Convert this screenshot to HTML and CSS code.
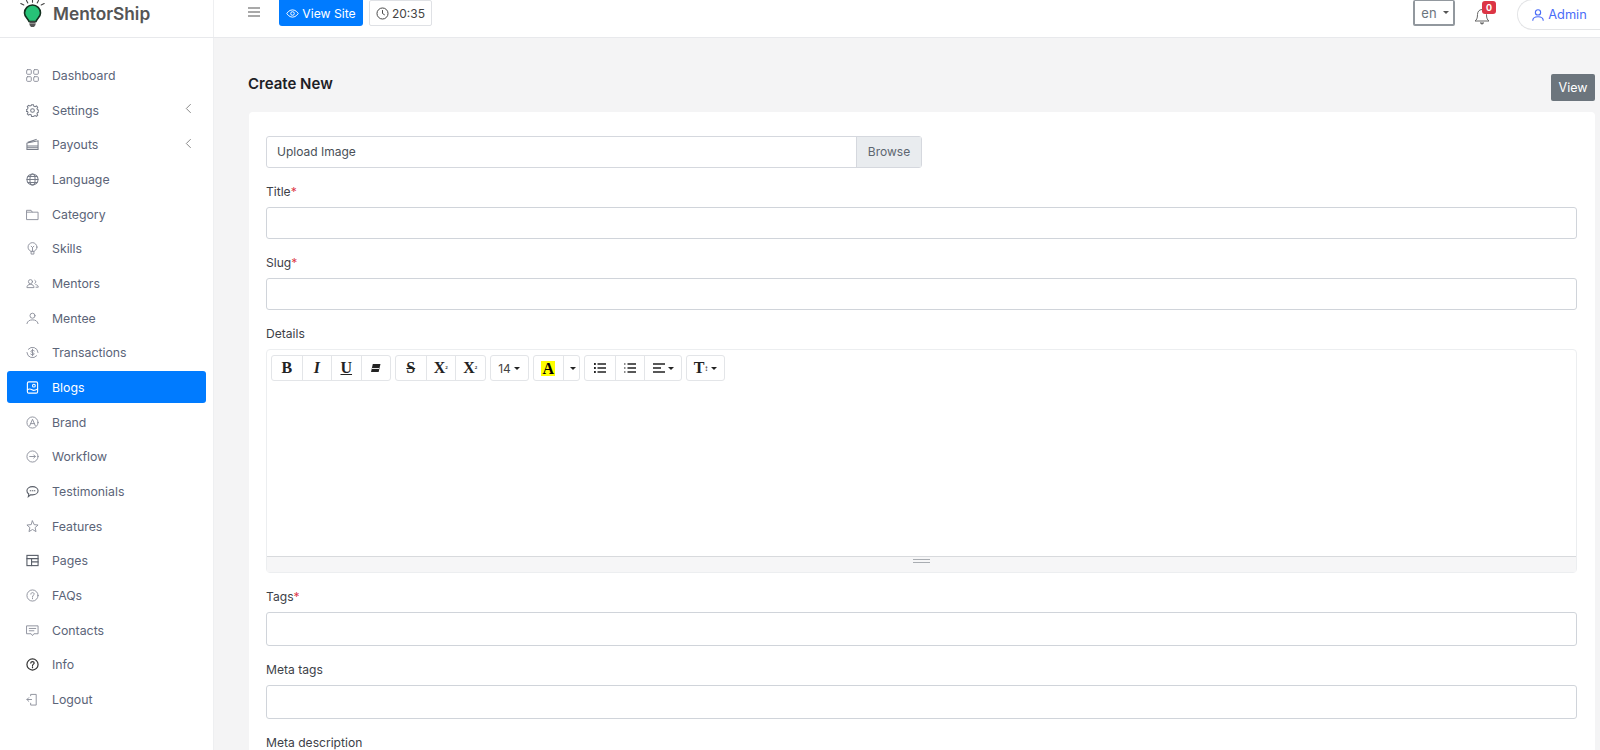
FILE: index.html
```html
<!DOCTYPE html>
<html lang="en">
<head>
<meta charset="utf-8">
<title>MentorShip</title>
<link rel="stylesheet" href="styles.css">
</head>
<body>
<header class="topbar">
  <div class="brand">
    <svg class="logo" viewBox="0 0 28 28" width="28" height="28">
      <g stroke="#444" stroke-width="1.100" stroke-linecap="round" fill="none"><path d="M13.500 0v2.200M7.500 .5l1.300 2.500M19.500 .5L18.200 3M1.800 3.500l3 1.500M25.200 3.500l-3 1.500"/></g>
      <path d="M13.500 5a8 8 0 0 0-8 8c0 3.500 3 5 4.500 8.500h7c1.500-3.500 4.500-5 4.500-8.500a8 8 0 0 0-8-8z" fill="#27c277" stroke="#14301f" stroke-width="1.600"/>
      <path d="M10.500 21.500h6v3.500l-1.500 2h-3l-1.500-2z" fill="#555"/>
      <path d="M10.500 23.500h6" stroke="#bbb" stroke-width=".6"/>
    </svg>
    <span class="brand-name">MentorShip</span>
  </div>
  <div class="top-left">
    <svg class="burger" viewBox="0 0 12 10" width="12" height="10"><path d="M0 1h12M0 5h12M0 9h12" stroke="#555" stroke-width="1.200"/></svg>
    <a class="view-site">
      <svg viewBox="0 0 16 16" width="13" height="13" fill="none" stroke="#fff" stroke-width="1.200"><path d="M1 8s2.500-4.500 7-4.500S15 8 15 8s-2.500 4.500-7 4.500S1 8 1 8z"/><circle cx="8" cy="8" r="2.200"/></svg>
      View Site
    </a>
    <span class="clock">
      <svg viewBox="0 0 16 16" width="13" height="13" fill="none" stroke="#444" stroke-width="1.200"><circle cx="8" cy="8" r="6.800"/><path d="M8 3.800V8l2.800 1.800"/></svg>
      20:35
    </span>
  </div>
  <div class="top-right">
    <span class="lang">en<i class="caret"></i></span>
    <span class="bell">
      <svg viewBox="0 0 16 18" width="16" height="18" fill="none" stroke="#666" stroke-width="1"><path d="M8 2.500c-3 0-4.500 2.500-4.500 5 0 4-1 5.500-2.500 6.500h14c-1.500-1-2.500-2.500-2.500-6.500 0-2.500-1.500-5-4.500-5z"/><path d="M6.500 15.500a1.500 1.500 0 0 0 3 0" fill="#666"/></svg>
      <b class="badge">0</b>
    </span>
    <span class="admin">
      <svg viewBox="0 0 16 16" width="14" height="14" fill="none" stroke="#4a6cf7" stroke-width="1.300"><circle cx="8" cy="5" r="3"/><path d="M2 14.500c0-3 2.500-4.500 6-4.500s6 1.500 6 4.500"/></svg>
      Admin
    </span>
  </div>
</header>
<div class="shell">
  <nav class="sidebar">
    <a class="nav-item"><svg class="ico" viewBox="0 0 14 14"><rect x=".7" y=".7" width="5" height="5" rx="1"/><rect x="8.300" y=".7" width="5" height="5" rx="1"/><rect x=".7" y="8.300" width="5" height="5" rx="1"/><rect x="8.300" y="8.300" width="5" height="5" rx="1"/></svg><span>Dashboard</span></a>
    <a class="nav-item"><svg class="ico mid" viewBox="0 0 14 14"><circle cx="7" cy="7" r="2"/><path d="M6 .7h2l.4 1.600 1.400.6 1.500-.8 1.300 1.400-.8 1.400.6 1.400 1.400.4v2l-1.400.4-.6 1.400.8 1.500-1.300 1.300-1.500-.8-1.400.6L8 13.400H6l-.4-1.600-1.400-.6-1.500.8-1.300-1.300.8-1.500-.6-1.400L.2 8V6l1.400-.4.6-1.400-.8-1.400 1.300-1.400 1.500.8 1.400-.6z"/></svg><span>Settings</span><svg class="chev" viewBox="0 0 8 12"><path d="M6.500 1L1.500 6l5 5"/></svg></a>
    <a class="nav-item"><svg class="ico mid" viewBox="0 0 14 14"><path d="M1 6v6.500h12V3L1 5.500zM1 8.500h12M1 10.500h12M2 4.500L11 1.500"/></svg><span>Payouts</span><svg class="chev" viewBox="0 0 8 12"><path d="M6.500 1L1.500 6l5 5"/></svg></a>
    <a class="nav-item"><svg class="ico mid" viewBox="0 0 14 14"><circle cx="7" cy="7" r="6"/><ellipse cx="7" cy="7" rx="2.800" ry="6"/><path d="M1 7h12M2 3.800h10M2 10.200h10"/></svg><span>Language</span></a>
    <a class="nav-item"><svg class="ico" viewBox="0 0 14 14"><path d="M1 2.500h4.500l1.200 2H13v8H1zM1 4.500h5.700"/></svg><span>Category</span></a>
    <a class="nav-item"><svg class="ico" viewBox="0 0 14 14"><circle cx="7" cy="5.500" r="4.800"/><path d="M5.500 10v3h3v-3M7 10V6M5.500 4.500L7 6l1.500-1.500"/></svg><span>Skills</span></a>
    <a class="nav-item"><svg class="ico" viewBox="0 0 14 14"><circle cx="4.800" cy="5" r="2.200"/><path d="M1 11c0-2 1.500-3 3.800-3s3.800 1 3.800 3zM9.500 3.500a1.800 1.800 0 0 1 0 3.300M10.500 8.200c1.500.2 2.700 1 2.700 2.800h-2.400"/></svg><span>Mentors</span></a>
    <a class="nav-item"><svg class="ico" viewBox="0 0 14 14"><circle cx="7" cy="4" r="2.700"/><path d="M1 12.500c.6-3 3-4 6-4s5.400 1 6 4"/></svg><span>Mentee</span></a>
    <a class="nav-item"><svg class="ico" viewBox="0 0 14 14"><path d="M2.500 3.500A6 6 0 0 1 13 7M11.500 10.500A6 6 0 0 1 1 7M9 5.200C8.500 4.500 5.300 4.300 5.300 5.800S8.800 7 8.800 8.500 5.500 9.600 5 8.800M7 3.500v7"/></svg><span>Transactions</span></a>
    <a class="nav-item active"><svg class="ico" viewBox="0 0 14 14"><rect x="1.500" y="1" width="11" height="12" rx="1.500"/><circle cx="8.500" cy="5" r="1.500"/><path d="M1.500 9.500c2-1.500 3.500-1 5 0s3 1 6-1"/></svg><span>Blogs</span></a>
    <a class="nav-item"><svg class="ico" viewBox="0 0 14 14"><circle cx="7" cy="7" r="6"/><path d="M4 10.500L7 3.500l3 7M5 8.200h4"/></svg><span>Brand</span></a>
    <a class="nav-item"><svg class="ico" viewBox="0 0 14 14"><circle cx="7" cy="7" r="6"/><path d="M4 7h6M8.300 5.300L10 7 8.300 8.700"/></svg><span>Workflow</span></a>
    <a class="nav-item"><svg class="ico dark" viewBox="0 0 14 14"><path d="M7 1.800c3.300 0 6 1.900 6 4.400s-2.700 4.400-6 4.400c-.6 0-1.200 0-1.700-.2L2.500 12.500l.5-2.800C1.700 8.900 1 7.600 1 6.200c0-2.500 2.700-4.400 6-4.400z"/><path d="M4.500 6.200h.6M6.800 6.200h.6M9 6.200h.6"/></svg><span>Testimonials</span></a>
    <a class="nav-item"><svg class="ico" viewBox="0 0 14 14"><path d="M7 1l1.800 4 4.200.4-3.200 2.800 1 4.300L7 10.200 3.200 12.500l1-4.300L1 5.400 5.200 5z"/></svg><span>Features</span></a>
    <a class="nav-item"><svg class="ico dark" viewBox="0 0 14 14"><rect x="1" y="1.500" width="12" height="11"/><path d="M1 5h12M6 5v7.500M6 8.500h7"/></svg><span>Pages</span></a>
    <a class="nav-item"><svg class="ico" viewBox="0 0 14 14"><circle cx="7" cy="7" r="6"/><path d="M5.200 5.500C5.200 4.500 6 3.900 7 3.900s1.800.6 1.800 1.600S7 6.800 7 8.200M7 9.500v1"/></svg><span>FAQs</span></a>
    <a class="nav-item"><svg class="ico" viewBox="0 0 14 14"><path d="M1 2h12v8.500H8.500L7 12.500l-1.500-2H1zM3.500 4.800h7M3.500 7.300h5"/></svg><span>Contacts</span></a>
    <a class="nav-item"><svg class="ico black" viewBox="0 0 14 14"><circle cx="7" cy="7" r="6"/><path d="M5.200 5.500C5.200 4.500 6 3.900 7 3.900s1.800.6 1.800 1.600S7 6.800 7 8.200M7 9.500v1"/></svg><span>Info</span></a>
    <a class="nav-item"><svg class="ico" viewBox="0 0 14 14"><path d="M5 3V1.500h6v11.500H5v-2M1 7h5M3 5L1 7l2 2"/></svg><span>Logout</span></a>
  </nav>
  <main class="main">
    <div class="title-row">
      <h1 class="page-title">Create New</h1>
      <a class="view-btn">View</a>
    </div>
    <section class="card">
      <div class="upload"><span class="upload-label">Upload Image</span><span class="browse">Browse</span></div>
      <label class="field-label">Title<em>*</em></label>
      <div class="input"></div>
      <label class="field-label">Slug<em>*</em></label>
      <div class="input"></div>
      <label class="field-label">Details</label>
      <div class="editor">
        <div class="toolbar">
          <div class="tgroup">
            <span class="tbtn w29 serif bold">B</span><span class="tbtn w29 serif bold ital">I</span><span class="tbtn w29 serif bold under">U</span><span class="tbtn w29"><svg viewBox="0 0 12 10" width="11" height="9"><path d="M3 0h8.500L9.500 9H1z" fill="#222"/><path d="M2 5h8" stroke="#fff"/></svg></span>
          </div>
          <div class="tgroup">
            <span class="tbtn w29 serif bold strike">S</span><span class="tbtn w29 serif bold">X<sup>2</sup></span><span class="tbtn w29 serif bold">X<sub>2</sub></span>
          </div>
          <div class="tgroup"><span class="tbtn w37 plain">14<i class="caret small"></i></span></div>
          <div class="tgroup">
            <span class="tbtn w29 serif bold"><span class="hilite">A</span></span><span class="tbtn w16"><i class="caret small"></i></span>
          </div>
          <div class="tgroup">
            <span class="tbtn w29"><svg viewBox="0 0 12 10" width="12" height="10"><path d="M3.500 1H12M3.500 5H12M3.500 9H12" stroke="#222" stroke-width="1.500"/><path d="M0 1h1.800M0 5h1.800M0 9h1.800" stroke="#222" stroke-width="1.800"/></svg></span>
            <span class="tbtn w29"><svg viewBox="0 0 12 10" width="12" height="10"><path d="M3.500 1H12M3.500 5H12M3.500 9H12" stroke="#222" stroke-width="1.500"/><path d="M0 1h1.500M0 5h1.500M0 9h1.500" stroke="#666" stroke-width="1.500"/></svg></span>
            <span class="tbtn w37"><svg viewBox="0 0 12 10" width="12" height="10"><path d="M0 1h12M0 5h8M0 9h12" stroke="#222" stroke-width="1.300"/></svg><i class="caret small"></i></span>
          </div>
          <div class="tgroup"><span class="tbtn w37 serif bold large">T<span class="tiny">↕</span><i class="caret small"></i></span></div>
        </div>
        <div class="edit-area"></div>
        <div class="resize"><i></i></div>
      </div>
      <label class="field-label tags">Tags<em>*</em></label>
      <div class="input tall"></div>
      <label class="field-label">Meta tags</label>
      <div class="input tall"></div>
      <label class="field-label">Meta description</label>
    </section>
  </main>
</div>
</body>
</html>
```
FILE: styles.css
```css
* { box-sizing: border-box; }
html, body { margin: 0; height: 750px; overflow: hidden; }
body { font-family: Inter, "Liberation Sans", sans-serif; color: #333; background: #f4f4f5; font-size: 12px; display: flex; flex-direction: column; }

.topbar { height: 38px; flex: none; background: #fff; border-bottom: 1px solid #e8e9ec; display: flex; align-items: flex-start; }
.brand { width: 214px; height: 37px; flex: none; border-right: 1px solid #eeeff1; display: flex; align-items: flex-start; padding-left: 19px; gap: 6px; }
.brand-name { font-size: 17.300px; font-weight: 600; color: #555; line-height: 27px; }
.top-left { display: flex; align-items: flex-start; padding-left: 34px; }
.burger { margin-top: 7px; margin-right: 19px; }
.view-site { height: 26px; width: 84px; background: #007bff; color: #fff; border-radius: 0 0 3px 3px; display: flex; align-items: center; justify-content: center; gap: 3px; font-size: 12.200px; }
.clock { height: 26px; width: 63px; margin-left: 6px; border: 1px solid #dfe1e5; border-radius: 2px; display: flex; align-items: center; justify-content: center; gap: 3px; color: #444; font-size: 12px; }
.top-right { margin-left: auto; display: flex; align-items: flex-start; }
.lang { width: 42px; height: 26px; border: 2px solid #92989e; border-top-width: 1px; border-radius: 2px; color: #6c757d; font-size: 13px; display: flex; align-items: center; justify-content: center; gap: 6px; padding-left: 2px; }
.caret { width: 0; height: 0; border: 3.500px solid transparent; border-top-color: #555; border-bottom: 0; display: inline-block; }
.caret.small { border-width: 3px; border-bottom: 0; border-top-color: #222; margin-left: 3px; }
.bell { position: relative; margin-left: 19px; margin-right: 21px; width: 22px; height: 26px; padding-top: 7px; }
.badge { position: absolute; left: 8px; top: 1px; width: 14px; height: 13px; background: #dc3545; color: #fff; border-radius: 3px; font-size: 9px; line-height: 13px; text-align: center; }
.admin { width: 83px; height: 31px; margin-top: -1px; border: 1px solid #e3e4e6; border-right: 0; border-radius: 16px 0 0 16px; display: flex; align-items: center; justify-content: center; gap: 3px; color: #4a6cf7; font-size: 12.800px; }

.shell { flex: 1; display: flex; min-height: 0; overflow: hidden; }
.sidebar { width: 214px; flex: none; background: #fff; border-right: 1px solid #eeeff1; padding: 21.500px 7px 0; display: flex; flex-direction: column; gap: 2.670px; }
.nav-item { height: 32px; display: flex; align-items: center; padding-left: 19px; border-radius: 3px; color: #5b6478; font-size: 12.300px; }
.nav-item span { margin-left: 13px; flex: 1; }
.ico { width: 13px; height: 13px; flex: none; fill: none; stroke: #8b8f9a; stroke-width: 1; stroke-linecap: round; }
.ico.mid { stroke: #777c88; stroke-width: 1.100; }
.ico.dark { stroke: #5a5f69; stroke-width: 1.200; }
.ico.black { stroke: #333; stroke-width: 1.300; }
.chev { width: 7px; height: 11px; fill: none; stroke: #777; stroke-width: 1; margin-right: 14px; margin-top: -3px; }
.nav-item.active { background: #007bff; color: #fff; }
.nav-item.active .ico { stroke: #fff; stroke-width: 1.200; }

.main { flex: 1; min-width: 0; padding: 0 5px 0 34px; display: flex; flex-direction: column; overflow: hidden; }
.title-row { display: flex; justify-content: space-between; height: 74px; flex: none; }
.page-title { margin: 36px 0 0; font-size: 15px; font-weight: 600; color: #1d2026; line-height: 20px; }
.view-btn { margin-top: 36px; width: 44px; height: 27px; background: #6c757d; color: #fff; border-radius: 2px; font-size: 12.500px; display: flex; align-items: center; justify-content: center; }
.card { flex: 1; min-height: 0; overflow: hidden; margin-left: 1px; background: #fff; border-radius: 4px 4px 0 0; padding: 24px 18px 0 17px; }
.upload { width: 656px; height: 32px; border: 1px solid #d5d8de; border-radius: 3px; display: flex; align-items: stretch; margin-bottom: 16px; }
.upload-label { flex: 1; padding-left: 10px; line-height: 30px; color: #495057; font-size: 12px; }
.browse { width: 65px; background: #e9ecef; border-left: 1px solid #d5d8de; color: #5d6670; font-size: 12px; line-height: 30px; text-align: center; }
.field-label { display: block; height: 16px; line-height: 16px; font-size: 12.100px; color: #3d4148; margin-bottom: 7px; }
.field-label em { color: #dc3545; font-style: normal; }
.input { height: 32px; border: 1px solid #d0d4da; border-radius: 3px; margin-bottom: 16px; }
.input.tall { height: 34px; }
.field-label.tags { margin-top: 16px; }
.editor { height: 224px; border: 1px solid #eceef0; border-radius: 4px; display: flex; flex-direction: column; }
.toolbar { display: flex; gap: 4px; padding: 5px 0 0 4px; height: 31px; flex: none; }
.tgroup { display: flex; height: 26px; border: 1px solid #e3e5e8; border-radius: 3px; }
.tbtn { display: flex; align-items: center; justify-content: center; border-left: 1px solid #e3e5e8; color: #222; height: 24px; font-size: 12px; }
.tbtn:first-child { border-left: 0; }
.w29 { width: 29.500px; }
.w16 { width: 16px; }
.w37 { width: 37px; }
.serif { font-family: "Liberation Serif", serif; font-size: 16px; }
.large { font-size: 16px; }
.bold { font-weight: 700; }
.ital { font-style: italic; }
.under { text-decoration: underline; }
.strike { text-decoration: line-through; }
.plain { color: #444; font-size: 12px; }
.tbtn sup, .tbtn sub { font-size: 5px; line-height: 0; }
.tiny { font-size: 8px; font-weight: 400; }
.hilite { background: #ffff00; padding: 0 1px; line-height: 15px; color: #000; }
.edit-area { flex: 1; }
.resize { height: 16px; flex: none; background: #f6f6f7; border-top: 1px solid #d8dadd; display: flex; align-items: flex-start; justify-content: center; padding-top: 2px; }
.resize i { width: 17px; height: 4px; border-top: 1px solid #a9adb2; border-bottom: 1px solid #a9adb2; }
```
